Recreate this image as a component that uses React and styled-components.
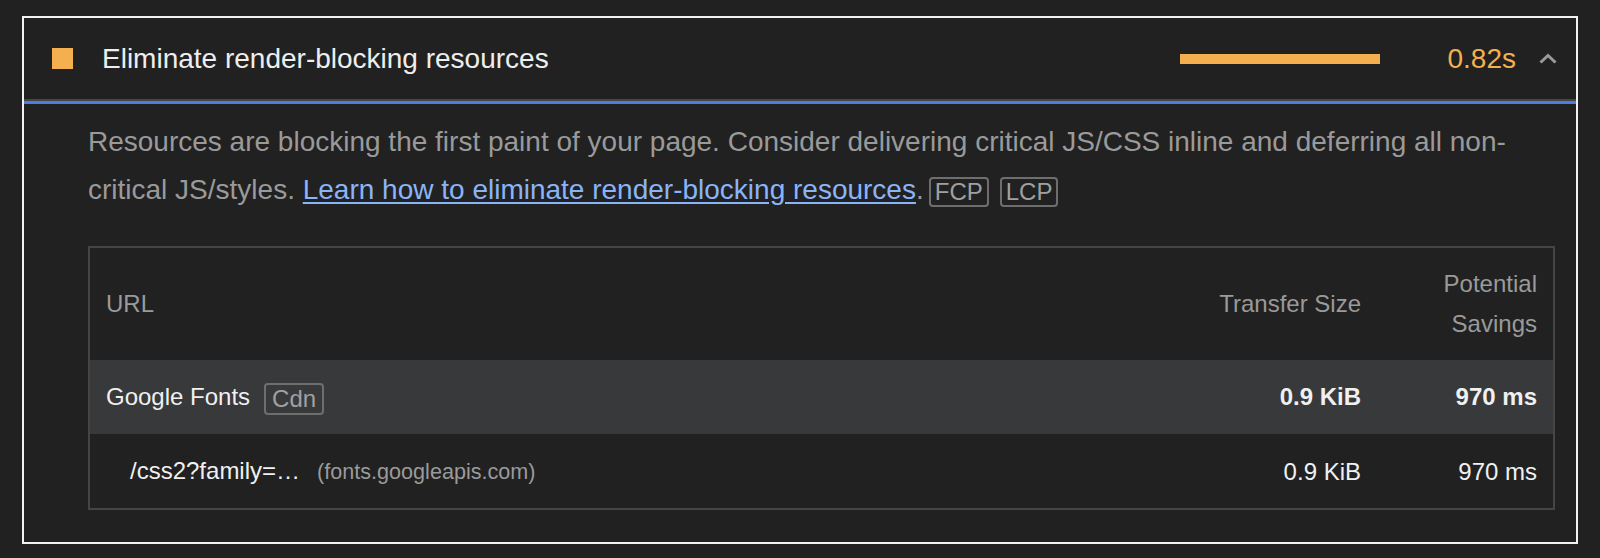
import React from 'react'
import styled, { createGlobalStyle } from 'styled-components'

const GlobalStyle = createGlobalStyle`
    html, body {
        margin: 0;
        padding: 0;
        background: #212121;
    }
    body {
        font-family: "Liberation Sans", Arial, Helvetica, sans-serif;
    }
`

const rows = [
    {
        group: 'Google Fonts',
        tag: 'Cdn',
        size: '0.9 KiB',
        savings: '970 ms',
        items: [
            { url: '/css2?family=…', host: '(fonts.googleapis.com)', size: '0.9 KiB', savings: '970 ms' },
        ],
    },
]

function App() {
    return (
        <Page>
            <GlobalStyle />
            <Audit>
                <Header>
                    <Square />
                    <Title>Eliminate render-blocking resources</Title>
                    <Bar style={{ width: 200 }} />
                    <Time>0.82s</Time>
                    <Chevron width="18" height="11" viewBox="0 0 18 11">
                        <polyline points="1.5,9.5 9,2.5 16.5,9.5" fill="none" stroke="#9a9a9a" strokeWidth="3" />
                    </Chevron>
                </Header>
                <Body>
                    <Description>
                        Resources are blocking the first paint of your page. Consider delivering critical JS/CSS inline and deferring all non-critical JS/styles.{' '}
                        <Link href="#">Learn how to eliminate render-blocking resources</Link>.
                        <Badge>FCP</Badge>
                        <Badge>LCP</Badge>
                    </Description>
                    <Table>
                        <HeadRow>
                            <Cell>URL</Cell>
                            <Cell numeric>Transfer Size</Cell>
                            <Cell numeric>Potential Savings</Cell>
                        </HeadRow>
                        {rows.map((row) => (
                            <React.Fragment key={row.group}>
                                <GroupRow>
                                    <Cell>
                                        {row.group}
                                        <Badge small>{row.tag}</Badge>
                                    </Cell>
                                    <Cell numeric bold>{row.size}</Cell>
                                    <Cell numeric bold>{row.savings}</Cell>
                                </GroupRow>
                                {row.items.map((item) => (
                                    <ItemRow key={item.url}>
                                        <Cell indent>
                                            {item.url}
                                            <Host>{item.host}</Host>
                                        </Cell>
                                        <Cell numeric>{item.size}</Cell>
                                        <Cell numeric>{item.savings}</Cell>
                                    </ItemRow>
                                ))}
                            </React.Fragment>
                        ))}
                    </Table>
                </Body>
            </Audit>
        </Page>
    )
}

export default App

const Page = styled.div`
    padding: 16px 22px 15px;
    background: #212121;
`
const Audit = styled.div`
    border: 2px solid #f2f2f2;
    background: #212121;
`
const Header = styled.div`
    height: 81px;
    display: flex;
    align-items: center;
    padding: 0 19px 0 28px;
    border-bottom: 2px solid #474747;
    box-shadow: 0 3px 0 #4a7fe0;
    position: relative;
`
const Square = styled.div`
    width: 21px;
    height: 21px;
    background: #f4b04f;
    flex-shrink: 0;
`
const Title = styled.div`
    flex: 1;
    margin-left: 29px;
    font-size: 28px;
    color: #eeeeee;
`
const Bar = styled.div`
    height: 10px;
    background: #f4b04f;
    margin-right: 68px;
`
const Time = styled.div`
    font-size: 28px;
    color: #f4b04f;
`
const Chevron = styled.svg`
    margin-left: 23px;
    display: block;
`
const Body = styled.div`
    padding: 17px 21px 32px 64px;
`
const Description = styled.div`
    font-size: 28px;
    line-height: 48px;
    color: #9a9a9a;
`
const Link = styled.a`
    color: #8ab4f8;
    text-decoration: underline;
    text-underline-offset: 3px;
`
const Badge = styled.span`
    display: inline-block;
    vertical-align: middle;
    font-size: 24px;
    line-height: ${(p) => (p.small ? '28px' : '26px')};
    padding: ${(p) => (p.small ? '0 6px' : '0 4px')};
    margin-left: ${(p) => (p.small ? '14px' : '5px')};
    border: 2px solid #6e6e6e;
    border-radius: 4px;
    color: #a0a0a0;
    & + & {
        margin-left: 11px;
    }
`
const Table = styled.div`
    margin-top: 32px;
    border: 2px solid #454545;
    font-size: 24px;
`
const Row = styled.div`
    display: grid;
    grid-template-columns: 1fr 200px 176px;
    align-items: center;
    padding: 16px 0;
`
const HeadRow = styled(Row)`
    line-height: 40px;
    color: #9a9a9a;
`
const GroupRow = styled(Row)`
    line-height: 42px;
    background: #38393b;
    color: #f0f0f0;
`
const ItemRow = styled(Row)`
    line-height: 41px;
    color: #f0f0f0;
`
const Cell = styled.div`
    padding: 0 16px 0 ${(p) => (p.indent ? '40px' : '16px')};
    text-align: ${(p) => (p.numeric ? 'right' : 'left')};
    font-weight: ${(p) => (p.bold ? 700 : 400)};
    white-space: ${(p) => (p.numeric ? 'normal' : 'nowrap')};
`
const Host = styled.span`
    margin-left: 17px;
    font-size: 21.6px;
    color: #9a9a9a;
`
